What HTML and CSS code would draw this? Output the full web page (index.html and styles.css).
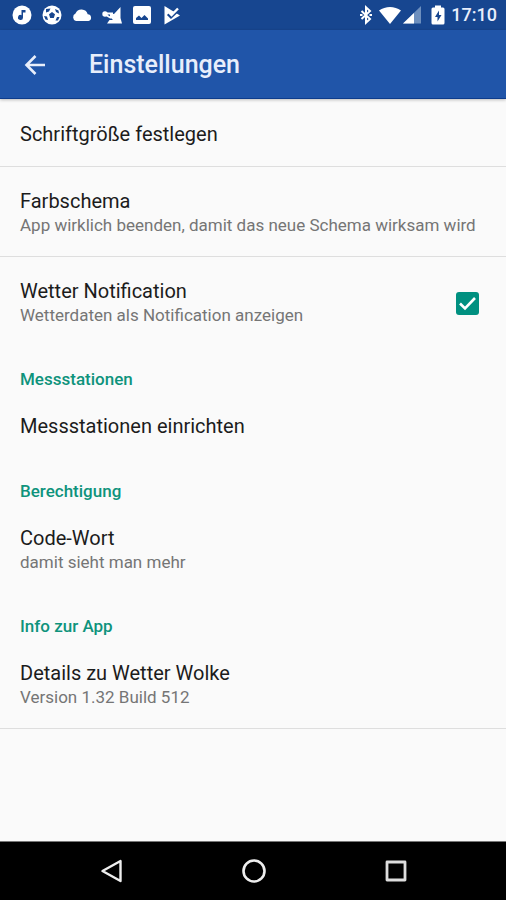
FILE: index.html
```html
<!DOCTYPE html>
<html lang="de">
<head>
<meta charset="utf-8">
<meta name="viewport" content="width=device-width, initial-scale=1">
<title>Einstellungen</title>
<link rel="stylesheet" href="styles.css">
</head>
<body>
<div class="status">
  <div class="status-icons">
    <svg class="icon" viewBox="0 0 20 20"><circle cx="10" cy="10" r="9.5" fill="#fff"/><path d="M9.500 5h4v2.500h-2.500v5a2.500 2.500 0 1 1-1.500-2.300z" fill="#174690"/></svg>
    <svg class="icon" viewBox="0 0 20 20"><circle cx="10" cy="10" r="9.500" fill="#fff"/><path d="M10 7l3 2.300-1.200 3.700H8.200L7 9.300zM4 4l4.500-.5L7 6.500 4 7.500zM13 4l3.500 1.500.5 3-3-1.500zM2 11l3 .5 1 3.500-2.500-.5zM17.500 12l-2.500 0-1.500 3.500 2.500 0z" fill="#174690"/></svg>
    <svg class="icon" viewBox="0 0 20 20"><path d="M4 16A4 4 0 0 1 3.500 8.500a6.500 6.500 0 0 1 12.200.8A3.400 3.400 0 0 1 16.500 16z" fill="#fff"/></svg>
    <svg class="icon" viewBox="0 0 20 20"><circle cx="3" cy="9" r="2.700" fill="#fff"/><path d="M3 8.500h8M4 10l5 3" stroke="#fff" stroke-width="2"/><path d="M8 8.500l4 .5L18.500 2v11l1.500 5.500H5L7.500 15H11l-3-3z" fill="#fff"/></svg>
    <svg class="icon" viewBox="0 0 20 20"><rect x="1" y="1" width="18" height="18" rx="2" fill="#fff"/><path d="M4 15v-2l3-2.500 2.500 2.500 3-3 3.500 3.500V15z" fill="#174690"/></svg>
    <svg class="icon" viewBox="0 0 20 20"><path d="M2.500 1L18 10.500 2.500 19.500z" fill="#fff"/><path d="M6 9l3 3 8.500-8" fill="none" stroke="#174690" stroke-width="3"/><path d="M6 6.500l3.500 3.500L16 3.500" fill="none" stroke="#fff" stroke-width="2.400"/></svg>
  </div>
  <div class="status-icons status-right">
    <svg class="icon bluetooth" viewBox="0 0 14 20"><path d="M2.500 6l8.500 8-4 3.700V2.300L11 6l-8.500 8" fill="none" stroke="#fff" stroke-width="2"/><path d="M1 10h2.500M10.500 10H13" stroke="#fff" stroke-width="2.200"/></svg>
    <svg class="icon wifi" viewBox="0 0 22 20"><path d="M0 5.500C6.500.700 15.500.700 22 5.500L11 19z" fill="#fff"/></svg>
    <svg class="icon signal" viewBox="0 0 18 20"><path d="M0 18.500L18 1v17.500z" fill="#6d8fbe"/><path d="M0 18.500L11 8v10.500z" fill="#fff"/></svg>
    <svg class="icon battery" viewBox="0 0 14 20"><path d="M4 .5h6v2h2a1.500 1.500 0 0 1 1.500 1.500v14A1.500 1.500 0 0 1 12 19.500H2A1.500 1.500 0 0 1 .5 18V4A1.500 1.500 0 0 1 2 2.500h2z" fill="#fff"/><path d="M8 5.500L4 12h2.500v4.500L10.500 10H8z" fill="#174690"/></svg>
    <span class="clock">17:10</span>
  </div>
</div>
<header class="toolbar">
  <button class="back" aria-label="Zurück"><svg viewBox="0 0 22 22"><path d="M21 11H3M11.500 2l-9 9 9 9" fill="none" stroke="#e8eefb" stroke-width="2.600"/></svg></button>
  <h1>Einstellungen</h1>
</header>
<main>
  <section class="item divided"><h2>Schriftgröße festlegen</h2></section>
  <section class="item divided"><h2>Farbschema</h2><p>App wirklich beenden, damit das neue Schema wirksam wird</p></section>
  <label class="item check-item" for="notification">
    <span><span class="label-title">Wetter Notification</span><span class="label-sub">Wetterdaten als Notification anzeigen</span></span>
    <span class="check"><input id="notification" type="checkbox" checked><svg viewBox="0 0 23 23"><path d="M4 11.500l5 5L19 6" fill="none" stroke="#fff" stroke-width="2.600"/></svg></span>
  </label>
  <h3>Messstationen</h3>
  <section class="item"><h2>Messstationen einrichten</h2></section>
  <h3>Berechtigung</h3>
  <section class="item"><h2>Code-Wort</h2><p>damit sieht man mehr</p></section>
  <h3>Info zur App</h3>
  <section class="item divided"><h2>Details zu Wetter Wolke</h2><p>Version 1.32 Build 512</p></section>
</main>
<nav class="navbar">
  <button aria-label="Zurück"><svg viewBox="0 0 24 24"><path d="M20.500 2v20L2.500 12z" fill="none" stroke="#eee" stroke-width="2.400" stroke-linejoin="round"/></svg></button>
  <button aria-label="Startseite"><svg viewBox="0 0 24 24"><circle cx="12" cy="12" r="10.500" fill="none" stroke="#eee" stroke-width="2.600"/></svg></button>
  <button aria-label="Übersicht"><svg viewBox="0 0 24 24"><rect x="3" y="3" width="18" height="18" fill="none" stroke="#ddd" stroke-width="2.800" stroke-linejoin="round"/></svg></button>
</nav>
</body>
</html>
```
FILE: styles.css
```css
* {
  box-sizing: border-box;
}

body {
  margin: 0;
  min-height: 100vh;
  display: flex;
  flex-direction: column;
  background: #fafafa;
  color: #1c1c1c;
  font-family: Roboto, "Liberation Sans", sans-serif;
}

h1, h2, h3, p {
  margin: 0;
}

button {
  display: flex;
  padding: 0;
  border: 0;
  background: none;
}

.status {
  display: flex;
  justify-content: space-between;
  align-items: center;
  height: 30px;
  padding: 0 9px 0 12px;
  background: #174690;
}

.status-icons {
  display: flex;
  align-items: center;
  gap: 10px;
}

.status-right {
  gap: 6px;
}

.icon {
  width: 20px;
  height: 20px;
}

.bluetooth {
  width: 14px;
}

.wifi {
  width: 22px;
}

.signal {
  width: 18px;
  margin-left: -4px;
}

.battery {
  width: 14px;
  margin-left: 4px;
}

.clock {
  color: #e8eefb;
  font-size: 18px;
  font-weight: 500;
  line-height: 30px;
}

.toolbar {
  display: flex;
  align-items: center;
  gap: 43px;
  height: 69px;
  padding: 2px 24px 0;
  border-bottom: 1px solid #0d3c8c;
  background: #2055a9;
  box-shadow: 0 1px 3px rgba(0, 0, 0, 0.25);
}

.back svg {
  width: 22px;
  height: 22px;
}

h1 {
  color: #e8eefb;
  font-size: 25px;
  font-weight: 500;
  line-height: 32px;
}

main {
  flex: 1;
  padding-top: 1px;
}

.item {
  padding: 22px 20px 19px;
}

.divided {
  border-bottom: 1px solid #dedede;
}

h2, .label-title {
  display: block;
  font-size: 20px;
  font-weight: 400;
  line-height: 25px;
}

p, .label-sub {
  display: block;
  color: #757575;
  font-size: 17px;
  line-height: 23px;
}

.check-item {
  display: flex;
  align-items: center;
  justify-content: space-between;
  padding-right: 27px;
}

.check {
  display: grid;
}

.check input, .check svg {
  grid-area: 1 / 1;
  width: 23px;
  height: 23px;
  margin: 0;
}

.check input {
  appearance: none;
  border-radius: 3px;
  background: #009080;
}

.check svg {
  pointer-events: none;
}

h3 {
  padding: 23px 20px 2px;
  color: #0e937c;
  font-size: 17px;
  font-weight: 500;
  line-height: 21px;
}

.navbar {
  display: flex;
  align-items: center;
  justify-content: space-between;
  height: 59px;
  padding: 0 98px 0 100px;
  border-top: 1px solid #777;
  background: #000;
}

.navbar svg {
  width: 24px;
  height: 24px;
}
```
